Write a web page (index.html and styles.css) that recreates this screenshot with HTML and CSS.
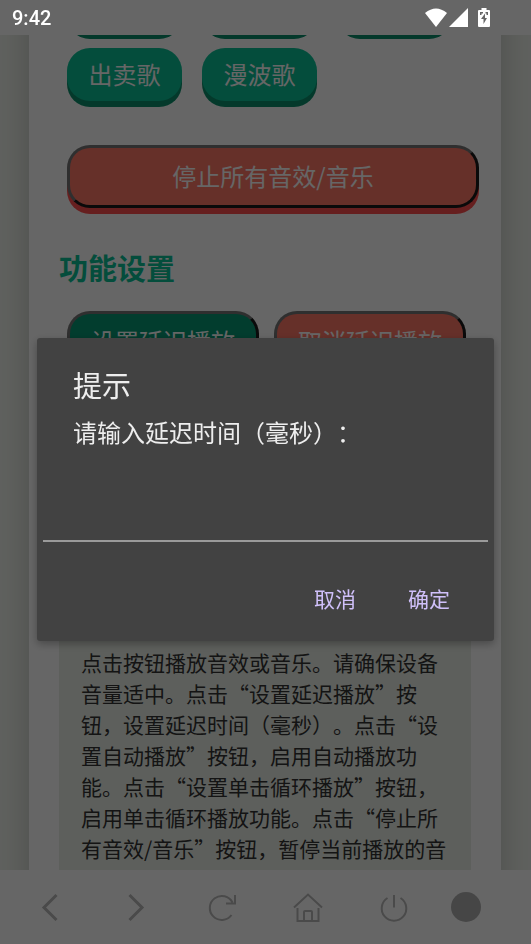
FILE: index.html
```html
<!DOCTYPE html>
<html lang="zh-CN">
<head>
<meta charset="utf-8">
<meta name="viewport" content="width=device-width, initial-scale=1">
<title>功能设置</title>
<link rel="stylesheet" href="styles.css">
</head>
<body>
<div class="screen">
  <header class="status">
    <span>9:42</span>
    <div class="status-icons">
      <svg width="22" height="20" viewBox="0 0 22 20"><path d="M0 5Q11-4 22 5L11 19Z" fill="#fff"/></svg>
      <svg width="19" height="20" viewBox="0 0 19 20"><path d="M19 0V19H0Z" fill="#fff"/></svg>
      <svg width="12" height="20" viewBox="0 0 12 20"><path fill="#fff" fill-rule="evenodd" d="M3.500 0h5v2H11q1 0 1 1v15q0 1-1 1H1q-1 0-1-1V3q0-1 1-1h2.500ZM2 4v3h1.500V5.500H5V4ZM7.500 4v1.500H8.500V7H10V4ZM7 5.500 3 11h2.500v5L9 10H7Z"/></svg>
    </div>
  </header>

  <main class="page">
    <div class="card">
      <div class="sounds">
        <button class="btn" aria-label="音效"></button>
        <button class="btn" aria-label="音效"></button>
        <button class="btn" aria-label="音效"></button>
        <button class="btn">出卖歌</button>
        <button class="btn">漫波歌</button>
      </div>
      <button class="btn outlined stop">停止所有音效/音乐</button>
      <h2>功能设置</h2>
      <div class="settings">
        <button class="btn outlined set">设置延迟播放</button>
        <button class="btn outlined cancel">取消延迟播放</button>
      </div>
      <p class="info">点击按钮播放音效或音乐。请确保设备音量适中。点击“设置延迟播放”按钮，设置延迟时间（毫秒）。点击“设置自动播放”按钮，启用自动播放功能。点击“设置单击循环播放”按钮，启用单击循环播放功能。点击“停止所有音效/音乐”按钮，暂停当前播放的音</p>
    </div>
  </main>

  <nav class="toolbar">
    <button aria-label="后退"><svg width="32" height="32" viewBox="0 0 32 32"><path class="thick" d="M22.500 4 10 16.500 22.500 29"/></svg></button>
    <button aria-label="前进"><svg width="32" height="32" viewBox="0 0 32 32"><path class="thick" d="M9.500 4 22 16.500 9.500 29"/></svg></button>
    <button aria-label="刷新"><svg width="32" height="32" viewBox="0 0 32 32"><path d="M25.500 24A12 12 0 1 1 26.500 11.500M29 4v8.500H20"/></svg></button>
    <button aria-label="主页"><svg width="32" height="32" viewBox="0 0 32 32"><path d="M2 16.500 16 3.500 30 16.500M5.500 17v13h21V17M12 30v-9q0-1 1-1h6q1 0 1 1v9"/></svg></button>
    <button aria-label="退出"><svg width="32" height="32" viewBox="0 0 32 32"><path d="M16 4V16.500M9.500 7A12.300 12.300 0 1 0 22.500 7"/></svg></button>
    <button aria-label="菜单"><svg width="32" height="32" viewBox="0 0 32 32"><circle cx="16" cy="16" r="15"/></svg></button>
  </nav>
</div>

<div class="overlay">
  <form class="dialog" role="dialog" aria-labelledby="title">
    <h1 id="title">提示</h1>
    <label for="delay">请输入延迟时间（毫秒）：</label>
    <input id="delay" type="text">
    <div class="actions">
      <button type="button">取消</button>
      <button type="button">确定</button>
    </div>
  </form>
</div>
</body>
</html>
```
FILE: styles.css
```css
* { box-sizing: border-box; }

body {
  margin: 0;
  font-family: "Noto Sans CJK SC", sans-serif;
  text-spacing-trim: space-all;
  background: #fff;
}

button {
  margin: 0;
  padding: 0;
  border: 0;
  background: none;
  font-family: inherit;
}

.screen {
  display: flex;
  flex-direction: column;
  height: 100vh;
  overflow: hidden;
}

.status {
  position: relative;
  z-index: 2;
  display: flex;
  flex: none;
  align-items: center;
  justify-content: space-between;
  height: 35px;
  padding: 2px 41px 0 12px;
  color: #fff;
  font: 500 20px/33px Roboto, sans-serif;
}

.status-icons { display: flex; gap: 2px; padding-bottom: 2px; }
.status-icons svg:last-child { margin-left: 8px; }

.page {
  flex: 1;
  min-height: 0;
  overflow: hidden;
  background: #eef2eb;
}

.card {
  margin: -55px 30px 0 29px;
  padding: 0 30px 30px;
  background: #fff;
  box-shadow: 0 0 30px rgba(0, 0, 0, .2);
}

.sounds {
  display: grid;
  grid-template-columns: repeat(3, 115px);
  gap: 15px 20px;
  padding-left: 8px;
}

.btn {
  height: 53px;
  padding: 0 0 2px;
  border-radius: 23px;
  background: #0cc096;
  box-shadow: 0 6px 0 #0a8f6c;
  color: #fff;
  font-size: 24px;
  line-height: 35px;
}

.outlined {
  height: 63px;
  border: 3px solid;
  border-color: #767676 #1a1a1a #1a1a1a #767676;
}

.stop {
  width: 100%;
  margin: 44px 0 0 8px;
}

.stop,
.cancel {
  background: #ff7867;
  box-shadow: 0 6px 0 #ff4e4e;
}

h2 {
  margin: 39px 0 24px;
  color: #0cc096;
  font-size: 29px;
  line-height: 40px;
}

.settings {
  display: flex;
  gap: 15px;
  padding-left: 8px;
}

.settings .btn { padding: 0 21px 4px; }
.set { background: #079874; }

.info {
  margin: 251px 0 0;
  padding: 22px;
  background: #e9eee6;
  color: #333;
  font-size: 21px;
  line-height: 31px;
}

.toolbar {
  position: relative;
  display: grid;
  flex: none;
  grid-template-columns: repeat(5, 86fr) 58fr;
  align-items: center;
  height: 74px;
  padding: 0 36px 0 7px;
  background: #fff;
}

.toolbar button { display: grid; place-items: center; }
.toolbar path { fill: none; stroke: #b8b8b8; stroke-width: 2; }
.toolbar .thick { stroke-width: 3; }
.toolbar circle { fill: #b0b0b0; }

.overlay {
  position: fixed;
  inset: 0;
  z-index: 1;
  display: grid;
  align-items: center;
  padding: 35px 37px 0;
  background: rgba(0, 0, 0, .6);
}

.dialog {
  display: flex;
  flex-direction: column;
  padding: 26px 6px 22px;
  border-radius: 3px;
  background: #424242;
  box-shadow: 0 3px 8px rgba(0, 0, 0, .3);
  color: #eee;
}

.dialog h1 {
  margin: 0 30px 10px;
  font-size: 29px;
  font-weight: 400;
  line-height: 40px;
}

.dialog label {
  margin: 0 30px;
  font-size: 24px;
  line-height: 36px;
}

.dialog input {
  height: 92px;
  padding: 0 30px;
  border: 0;
  border-bottom: 2px solid #9a9a9a;
  outline: 0;
  background: transparent;
  color: inherit;
  font: inherit;
  font-size: 24px;
}

.actions {
  display: flex;
  justify-content: flex-end;
  gap: 10px;
  margin-top: 35px;
  padding-right: 17px;
}

.actions button {
  padding: 0 21px;
  color: #d0c0fa;
  font-size: 21px;
  line-height: 42px;
}
```
